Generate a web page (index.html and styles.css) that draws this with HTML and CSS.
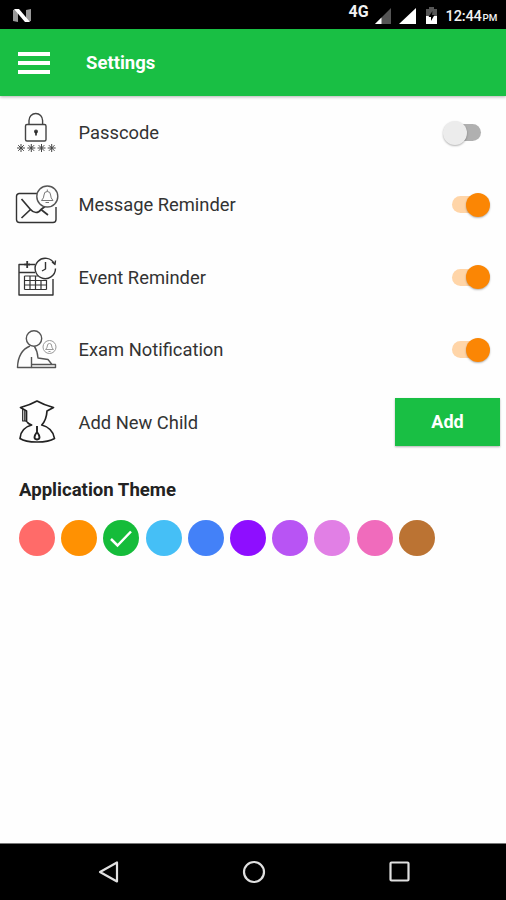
FILE: index.html
```html
<!DOCTYPE html>
<html lang="en">
<head>
  <meta charset="UTF-8">
  <meta name="viewport" content="width=device-width, initial-scale=1.0">
  <title>Settings</title>
  <link rel="stylesheet" href="styles.css">
</head>
<body>
  <div class="status-bar">
    <svg class="logo" width="20" height="16" viewBox="0 0 20 16">
      <path d="M1 2L6 1V14L1 13ZM14 2L19 1V13L14 14Z" fill="#999"/>
      <path d="M2 1H7L18 14H13Z" fill="#fff"/>
    </svg>
    <span class="network">4G</span>
    <svg class="signal" width="18" height="18" viewBox="0 0 18 18">
      <path d="M17 1V17H1Z" fill="#555"/>
      <path d="M7.5 10.5V17H1Z" fill="#fff"/>
    </svg>
    <svg class="signal full" width="18" height="18" viewBox="0 0 18 18">
      <path d="M17 1V17H0Z" fill="#fff"/>
    </svg>
    <svg class="battery" width="13" height="19" viewBox="0 0 13 19">
      <path d="M1 3H4V1H9V3H12V10H1Z" fill="#555"/>
      <path d="M1 10H12V18H1Z" fill="#fff"/>
      <path d="M7.5 5L3.5 11H6V15L9.5 9H7Z" fill="#000"/>
    </svg>
    <span class="clock">12:44<small>PM</small></span>
  </div>

  <header class="toolbar">
    <div class="menu"><i></i><i></i><i></i></div>
    <h1>Settings</h1>
  </header>

  <main>
    <div class="row">
      <svg class="icon" viewBox="0 0 48 48" stroke="#444">
        <rect x="13.5" y="15.5" width="20.5" height="16.5" rx="1.5"/>
        <path d="M17 15V11.500a6.800 7 0 0 1 13.600 0V15"/>
        <circle cx="24" cy="22.500" r="1.300" fill="#222"/>
        <path d="M24 23V26.500" stroke="#222" stroke-width="1.600"/>
        <path d="M9 35V43M5 39H13M6.200 36.200L11.800 41.800M11.800 36.200L6.200 41.800M19.300 35V43M15.300 39H23.300M16.500 36.200L22.100 41.800M22.100 36.200L16.500 41.800M29.500 35V43M25.500 39H33.500M26.700 36.200L32.300 41.800M32.300 36.200L26.700 41.800M39.700 35V43M35.700 39H43.700M36.900 36.200L42.500 41.800M42.500 36.200L36.900 41.800" stroke-width="1"/>
      </svg>
      <span class="label">Passcode</span>
      <div class="switch"></div>
    </div>
    <div class="row">
      <svg class="icon" viewBox="0 0 48 48" stroke="#333">
        <path d="M25 12.500H7A3 3 0 0 0 4.500 15.500V38.500A3 3 0 0 0 7.500 41.500H41A3 3 0 0 0 44 38.500V26"/>
        <path d="M9.500 18L18.500 28.500L9.500 37M18.500 28.500Q21 31.500 24 31.500T29 28.500L33 25.500M29 28.500L36 34" stroke-width="1.700"/>
        <circle cx="35.300" cy="15.500" r="10.500" stroke="#555"/>
        <path d="M29.500 19.500Q32 17 32 14Q32 10.500 35.300 10.500T38.600 14Q38.600 17 41 19.500ZM33.500 21.500H37M35.300 8.500V10.500" stroke="#777" stroke-width="1"/>
      </svg>
      <span class="label">Message Reminder</span>
      <div class="switch on"></div>
    </div>
    <div class="row">
      <svg class="icon" viewBox="0 0 48 48" stroke="#333">
        <path d="M13 11.500H7V42H41V26M17.500 11.500H23M7 19.500H23"/>
        <path d="M15.200 8V15M12.500 11.500H18" stroke-width="1.800"/>
        <path d="M12.500 23H26M12.500 27.500H34.500M12.500 32H34.500M12.500 36.500H34.500M12.500 23V36.500M18 23V36.500M23.500 23V36.500M29 27V36.500M34.500 27V36.500" stroke-width="1.200"/>
        <path d="M42.500 11A10.200 10.200 0 1 0 43.500 15.500M40 9L43 11.500L43.500 7.500"/>
        <path d="M33.500 9V16L30 18"/>
      </svg>
      <span class="label">Event Reminder</span>
      <div class="switch on"></div>
    </div>
    <div class="row">
      <svg class="icon" viewBox="0 0 48 48" stroke="#555">
        <circle cx="22" cy="12.500" r="7.700"/>
        <path d="M18 20Q6 25 5.500 41.500H19.500V31"/>
        <path d="M22.500 20.500Q25.500 25 26 32L36 33.500L40 38.500M19.500 38.500H43.500V41.500H19.500"/>
        <g stroke="#999" stroke-width="1">
          <circle cx="37.500" cy="21" r="6.500"/>
          <path d="M33.500 23.500Q35.300 22 35.300 20Q35.300 17.500 37.500 17.500T39.700 20Q39.700 22 41.500 23.500ZM36.500 25.500H38.500"/>
        </g>
      </svg>
      <span class="label">Exam Notification</span>
      <div class="switch on"></div>
    </div>
    <div class="row">
      <svg class="icon" viewBox="0 0 48 48" stroke="#222">
        <path d="M15 24Q16.500 26 19.700 27Q8.500 30 8 40.500Q13 44 25 44T42.500 40.500Q41 30 29.700 27Q34.500 22 35 13L41.500 9.500Q32 7 25 3Q18 7 8.500 9.500L14.500 13V24" stroke-width="1.700"/>
        <path d="M10.700 11V23H15M12.800 12.500V23" stroke-width="1.200"/>
        <path d="M25 28V34Q20 40.500 25 41.500Q30 40.500 25 34" stroke-width="1.900"/>
      </svg>
      <span class="label">Add New Child</span>
      <button class="add-button">Add</button>
    </div>

    <h2>Application Theme</h2>
    <div class="themes">
      <span class="theme red"></span>
      <span class="theme orange"></span>
      <span class="theme green">
        <svg width="36" height="36" viewBox="0 0 36 36"><path d="M8 19L14.500 25.500L28 11.500" fill="none" stroke="#fff" stroke-width="2.500"/></svg>
      </span>
      <span class="theme sky"></span>
      <span class="theme blue"></span>
      <span class="theme violet"></span>
      <span class="theme purple"></span>
      <span class="theme orchid"></span>
      <span class="theme pink"></span>
      <span class="theme brown"></span>
    </div>
  </main>

  <nav class="nav-bar">
    <svg width="24" height="24" viewBox="0 0 24 24"><path d="M20 2.500V21.500L3 12Z"/></svg>
    <svg width="24" height="24" viewBox="0 0 24 24"><circle cx="12" cy="12" r="10"/></svg>
    <svg width="24" height="24" viewBox="0 0 24 24"><rect x="2.500" y="2.500" width="18" height="18" rx="1"/></svg>
  </nav>
</body>
</html>
```

FILE: styles.css
```css
* {
  box-sizing: border-box;
}

body {
  margin: 0;
  height: 900px;
  display: flex;
  flex-direction: column;
  background: #fefefe;
  color: #333;
  font-family: Roboto, "Liberation Sans", sans-serif;
  overflow: hidden;
}

.status-bar {
  height: 29px;
  flex: none;
  display: flex;
  align-items: center;
  padding: 2px 9px 0 12px;
  background: #000;
  color: #f2f2f2;
}

.network {
  margin: 0 5px 7px auto;
  font-size: 16px;
  font-weight: 700;
  line-height: 18px;
}

.signal.full {
  margin: 0 8px 0 7px;
}

.clock {
  margin-left: 8px;
  font-size: 14.6px;
  font-weight: 500;
  letter-spacing: -0.2px;
}

.clock small {
  margin-left: 1px;
  font-size: 9.8px;
}

.toolbar {
  height: 67px;
  flex: none;
  display: flex;
  align-items: center;
  padding-left: 18px;
  background: #19bf44;
  color: #fff;
  box-shadow: 0 1px 3px rgba(0, 0, 0, 0.3);
}

.menu {
  width: 32px;
  display: grid;
  gap: 5px;
}

.menu i {
  height: 4px;
  background: #fff;
}

.toolbar h1 {
  margin: 0 0 0 36px;
  font-size: 18.5px;
  font-weight: 700;
}

main {
  flex: 1;
  padding-top: 0.4px;
}

.row {
  height: 72.4px;
  display: flex;
  align-items: center;
  padding: 0 6px 0 12px;
}

.icon {
  width: 48px;
  height: 48px;
  margin-right: 18.5px;
  fill: none;
  stroke-width: 1.4;
  stroke-linejoin: round;
}

.label {
  flex: 1;
  font-size: 18.35px;
}

.switch {
  width: 38px;
  height: 17px;
  margin-right: 19px;
  display: flex;
  align-items: center;
  border-radius: 8.5px;
  background: linear-gradient(90deg, transparent 40%, #b0b0b0 40%);
}

.switch::before {
  content: "";
  width: 24px;
  height: 24px;
  flex: none;
  border-radius: 50%;
  background: #ececec;
  box-shadow: 0 1px 2px rgba(0, 0, 0, 0.3);
}

.switch.on {
  margin-right: 10px;
  justify-content: flex-end;
  background: linear-gradient(90deg, #ffd5a8 60%, transparent 60%);
}

.switch.on::before {
  background: #fb8604;
}

.add-button {
  width: 105px;
  height: 48px;
  margin-bottom: 1px;
  border: none;
  background: #19bf44;
  color: #fff;
  font-family: inherit;
  font-size: 18px;
  font-weight: 700;
  box-shadow: 0 1px 2px rgba(0, 0, 0, 0.3);
}

h2 {
  margin: 20.6px 0 0 19px;
  color: #222;
  font-size: 18.6px;
  font-weight: 700;
  line-height: 22px;
}

.themes {
  display: flex;
  gap: 6.2px;
  padding: 19px 0 0 19px;
}

.theme {
  width: 36px;
  height: 36px;
  border-radius: 50%;
}

.red { background: #ff6b69; }
.orange { background: #ff9102; }
.green { background: #15bc3a; }
.sky { background: #45bff6; }
.blue { background: #4381f8; }
.violet { background: #8e0eff; }
.purple { background: #b854f4; }
.orchid { background: #e17fe5; }
.pink { background: #f06bbc; }
.brown { background: #bb7333; }

.nav-bar {
  height: 57px;
  flex: none;
  display: flex;
  justify-content: center;
  align-items: center;
  gap: 121.5px;
  padding: 0 0 1px 2px;
  border-top: 1px solid #777;
  background: #000;
}

.nav-bar svg {
  fill: none;
  stroke: #e0e0e0;
  stroke-width: 2.2;
  stroke-linejoin: round;
}
```
